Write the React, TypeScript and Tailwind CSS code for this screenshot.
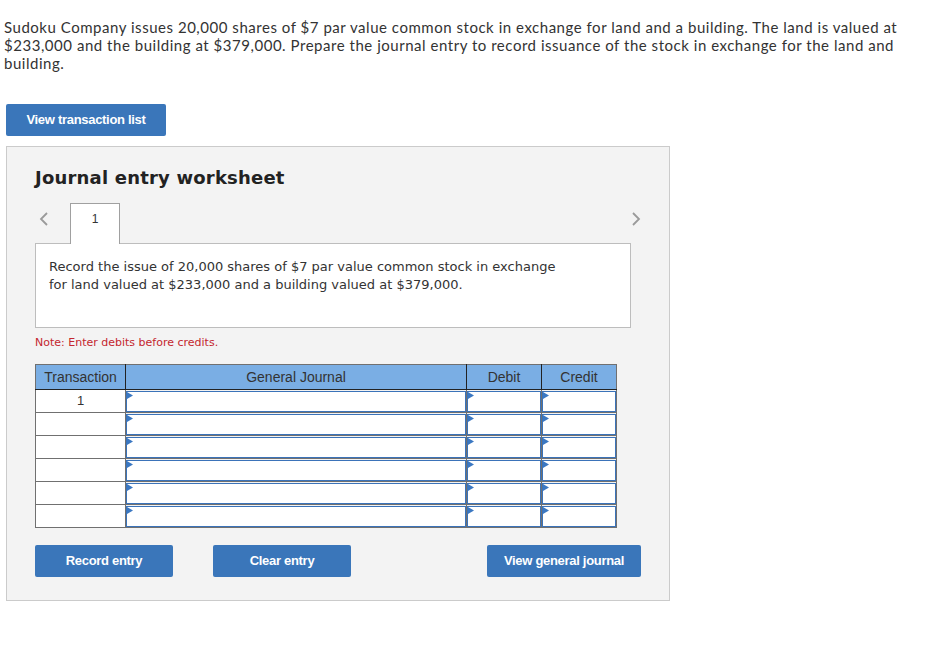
import type React from "react";

const rows = [1, 2, 3, 4, 5, 6];

function Marker() {
  return (
    <svg className="absolute left-0 top-0" width="6" height="8" viewBox="0 0 6 8">
      <polygon points="0,0 6,3.5 0,7" fill="#3b78c2" />
    </svg>
  );
}

function InputCell() {
  return (
    <td className="border border-[#707070] p-0 h-[23px]">
      <div className="relative h-[21px] border border-[#3b73b9] bg-white">
        <Marker />
      </div>
    </td>
  );
}

function BlueButton({ children, className }: { children: React.ReactNode; className?: string }) {
  return (
    <button
      type="button"
      className={
        "h-8 rounded-[2px] bg-[#3a76ba] text-white text-[13px] font-bold tracking-[-0.3px] font-['Liberation_Sans_Narrow','Liberation_Sans',sans-serif] " +
        (className ?? "")
      }
    >
      {children}
    </button>
  );
}

export default function App() {
  return (
    <div className="w-[951px] min-h-[658px] bg-white pt-[18px] font-['Lato',sans-serif]">
      {/* 题目 */}
      <p className="pl-1 w-[914px] text-[15px] leading-[18px] tracking-[0.53px] text-[#333]">
        Sudoku Company issues 20,000 shares of $7 par value common stock in exchange for land and a building. The land
        is valued at $233,000 and the building at $379,000. Prepare the journal entry to record issuance of the stock
        in exchange for the land and building.
      </p>

      <div className="pl-[6px] mt-8">
        <BlueButton className="w-[160px]">View transaction list</BlueButton>
      </div>

      {/* 工作表 */}
      <div className="ml-[6px] mt-[10px] w-[664px] h-[455px] border border-[#cbcbcb] bg-[#f3f3f3] pl-[28px] pt-[19px]">
        <h2 className="text-[18px] leading-6 font-bold tracking-[0.2px] text-[#222] font-['DejaVu_Sans',sans-serif]">
          Journal entry worksheet
        </h2>

        <div className="mt-[13px] flex items-end w-[606px]">
          <svg className="ml-[4px] mb-[17px]" width="10" height="14" viewBox="0 0 10 14">
            <polyline points="8,1 2,7 8,13" fill="none" stroke="#9a9a9a" strokeWidth="1.8" />
          </svg>
          <div className="relative z-10 ml-[21px] -mb-px w-[50px] h-[41px] border border-b-0 border-[#a0a0a0] bg-white pt-[6px] text-center text-[12px] text-[#333] font-['Liberation_Sans',sans-serif]">
            1
          </div>
          <svg className="ml-auto mb-[17px]" width="10" height="14" viewBox="0 0 10 14">
            <polyline points="2,1 8,7 2,13" fill="none" stroke="#9a9a9a" strokeWidth="1.8" />
          </svg>
        </div>

        <div className="w-[596px] h-[85px] border border-[#bdbdbd] bg-white pl-[13px] pt-[14px] text-[13px] leading-[18px] text-[#333] font-['DejaVu_Sans',sans-serif]">
          Record the issue of 20,000 shares of $7 par value common stock in exchange
          <br />
          for land valued at $233,000 and a building valued at $379,000.
        </div>

        <p className="mt-[8px] text-[11px] leading-[14px] text-[#c4262e] font-['DejaVu_Sans',sans-serif]">
          Note: Enter debits before credits.
        </p>

        {/* 分录表 */}
        <table className="mt-[14px] w-[581px] border-collapse table-fixed font-['Liberation_Sans',sans-serif] text-[14px] text-[#333]">
          <colgroup>
            <col className="w-[90px]" />
            <col className="w-[341px]" />
            <col className="w-[75px]" />
            <col className="w-[75px]" />
          </colgroup>
          <thead>
            <tr className="h-[25px] bg-[#7aaee4]">
              <th className="border border-[#707070] border-b-[#222] border-r-[#222] font-normal">Transaction</th>
              <th className="border border-[#707070] border-b-[#222] border-r-[#222] font-normal">General Journal</th>
              <th className="border border-[#707070] border-b-[#222] border-r-[#222] font-normal">Debit</th>
              <th className="border border-[#707070] border-b-[#222] font-normal">Credit</th>
            </tr>
          </thead>
          <tbody>
            {rows.map((r) => (
              <tr key={r}>
                <td className="border border-[#707070] bg-white h-[23px] p-0 text-center text-[13px]">
                  {r === 1 ? "1" : ""}
                </td>
                <InputCell />
                <InputCell />
                <InputCell />
              </tr>
            ))}
          </tbody>
        </table>

        <div className="mt-[17px] flex">
          <BlueButton className="w-[138px]">Record entry</BlueButton>
          <BlueButton className="ml-10 w-[138px]">Clear entry</BlueButton>
          <BlueButton className="ml-[136px] w-[154px]">View general journal</BlueButton>
        </div>
      </div>
    </div>
  );
}
